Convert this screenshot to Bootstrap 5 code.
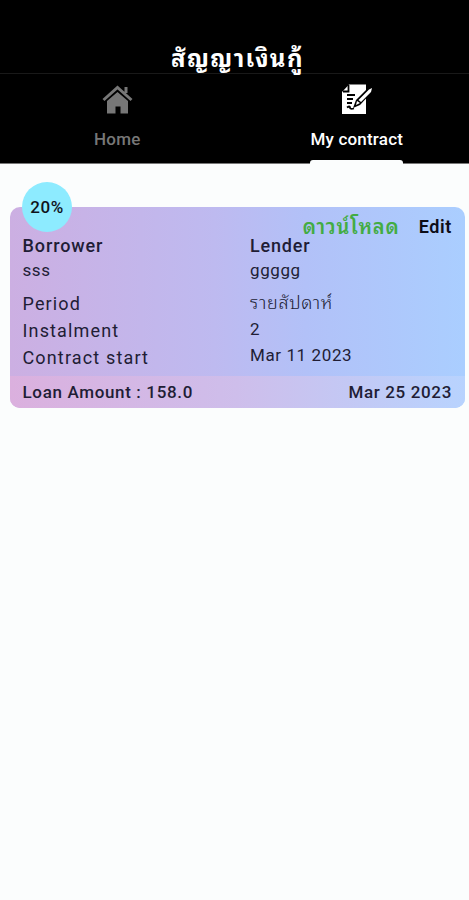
<!DOCTYPE html>
<html lang="th">
<head>
<meta charset="utf-8">
<meta name="viewport" content="width=device-width, initial-scale=1">
<title>สัญญาเงินกู้</title>
<link href="https://cdn.jsdelivr.net/npm/bootstrap@5.3.0/dist/css/bootstrap.min.css" rel="stylesheet">
<style>
body{font-family:Roboto,"Noto Sans Thai Looped","Noto Looped Thai",Loma,Waree,Garuda,Umpush,"Noto Serif Thai","Noto Sans Thai",sans-serif;background:#fbfdfd;color:#211d35;min-height:100vh;overflow-x:hidden}
.app-head{height:164px;background:#000;border-bottom:1px solid #777}
.app-title{height:74px;border-bottom:1px solid #191919;font-size:24px;font-weight:700;letter-spacing:1.4px;line-height:28px;color:#fff;white-space:nowrap;padding-left:6px}
.tab-link{height:89px;font-size:17px;font-weight:500;line-height:24px;color:#777;letter-spacing:.2px}
.tab-link svg{height:32px;margin-top:9px}
.tab-link .tab-text{margin-top:12px}
.tab-link.active{color:#fff;padding-left:10px}
.tab-line{width:93px;height:4px;border-radius:3px 3px 0 0;background:#fbfdfd;margin-top:auto;margin-bottom:-1px}
.loan-card{margin:43px 4px 0 10px;height:201px;border-radius:10px;background:linear-gradient(90deg,#ccafe2 0%,#bebaf0 45%,#b2c1f8 65%,#aaceff 100%)}
.rate{left:12px;top:-25px;width:50px;height:50px;background:#8debff;color:#10131b;font-size:17px;font-weight:500;letter-spacing:.5px;padding-top:2px}
.actions{right:13px;top:8px;height:24px;line-height:24px;font-size:18px;font-weight:600;color:#0d0d18;letter-spacing:.6px}
.actions .download{color:#43ac43;margin-right:19px;font-size:20px;letter-spacing:.9px}
.details{padding:25px 13px 0 12.5px;height:169px}
.details .left-col{width:227.5px}
.line{height:26px;line-height:26px;font-size:17px;letter-spacing:.6px;white-space:nowrap}
.term{height:27px;line-height:27px;font-size:18px;letter-spacing:1.15px}
.person{height:25px;line-height:28px;font-size:18px;letter-spacing:.9px}
.person.tight{letter-spacing:.8px}
.gap-row{margin-top:7px}
.period{font-size:18px;letter-spacing:.7px;font-weight:300}
.foot{height:32px;padding:2px 13px 0 12.5px;font-size:17px;font-weight:500;letter-spacing:.65px;border-radius:0 0 10px 10px;background:linear-gradient(90deg,#dbb0de,#cebeeb 50%,#b8d3fe)}
.med{font-weight:500}
</style>
</head>
<body>
<header class="app-head d-flex flex-column">
  <div class="app-title d-flex justify-content-center align-items-end">สัญญาเงินกู้</div>
  <nav class="d-flex">
    <a class="tab-link w-50 d-flex flex-column align-items-center text-decoration-none" href="#">
      <svg width="32" viewBox="0 0 32 32" fill="none"><path d="M2.500 17 16.500 4.500 30.500 17M25 10V4" stroke="currentColor" stroke-width="3"/><path d="M6 18 16.500 9 27 18v12.500h-7.500v-7h-5v7H6z" fill="currentColor"/></svg>
      <span class="tab-text">Home</span>
    </a>
    <a class="tab-link active w-50 d-flex flex-column align-items-center text-decoration-none" href="#">
      <svg width="32" viewBox="0 0 32 32"><path d="M8 1.500h17V31H1V9z" fill="#fff"/><path d="M2 8.500h5.500V2M6 12h8M6 16h6M6 20h5M6 24.500q3-2 3 0t4 1" fill="none" stroke="#000" stroke-width="1.800"/><path d="m12 25 3-8L27 5l5 3-13 14z" fill="#000"/><path d="m15 22 1-4 3 2zM17.500 17 28 6.500l3-1.500-1 4-10 10z" fill="#fff"/></svg>
      <span class="tab-text">My contract</span>
      <span class="tab-line"></span>
    </a>
  </nav>
</header>
<main>
  <section class="loan-card position-relative">
    <div class="rate position-absolute rounded-circle d-flex justify-content-center align-items-center">20%</div>
    <div class="actions position-absolute d-flex"><span class="download">ดาวน์โหลด</span><span>Edit</span></div>
    <div class="details d-flex">
      <div class="left-col">
        <div class="line med person">Borrower</div>
        <div class="line">sss</div>
        <div class="line term gap-row">Period</div>
        <div class="line term">Instalment</div>
        <div class="line term">Contract start</div>
      </div>
      <div>
        <div class="line med person tight">Lender</div>
        <div class="line">ggggg</div>
        <div class="line period gap-row">รายสัปดาห์</div>
        <div class="line">2</div>
        <div class="line">Mar 11 2023</div>
      </div>
    </div>
    <div class="foot d-flex justify-content-between align-items-center"><span>Loan Amount : 158.0</span><span>Mar 25 2023</span></div>
  </section>
</main>
<script src="https://cdn.jsdelivr.net/npm/bootstrap@5.3.0/dist/js/bootstrap.bundle.min.js"></script>
</body>
</html>
